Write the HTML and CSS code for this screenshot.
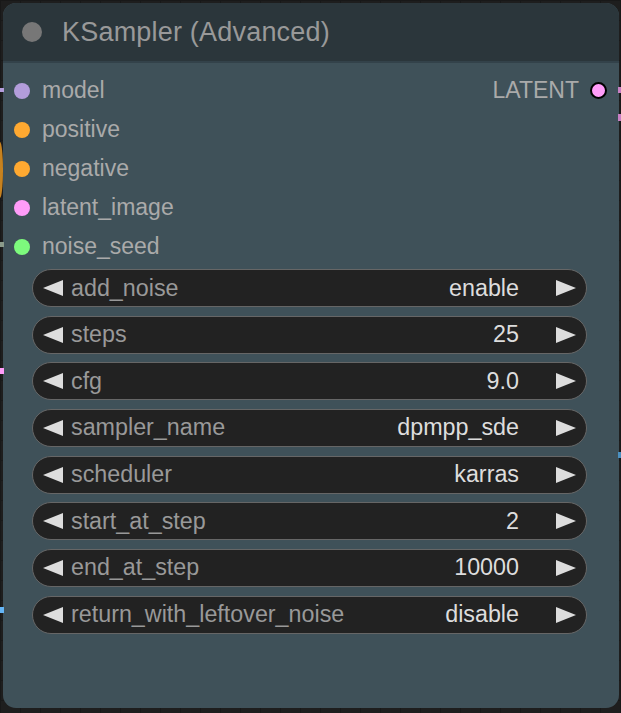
FILE: index.html
```html
<!DOCTYPE html>
<html>
<head>
<meta charset="utf-8">
<link rel="stylesheet" href="styles.css">
</head>
<body>
<div class="canvas">
  <span class="link l-model"></span>
  <span class="link l-orange"></span>
  <span class="link l-gray"></span>
  <span class="link l-pink"></span>
  <span class="link l-blue"></span>
  <span class="link r-pink1"></span>
  <span class="link r-pink2"></span>
  <span class="link r-blue"></span>

  <div class="node">
    <div class="title">
      <span class="title-dot"></span>
      <span class="title-text">KSampler (Advanced)</span>
    </div>
    <div class="body">
      <div class="slots">
        <div class="row">
          <div class="slot"><span class="dot c-model"></span><span>model</span></div>
          <div class="slot out"><span>LATENT</span><span class="dot c-latent outline"></span></div>
        </div>
        <div class="row"><div class="slot"><span class="dot c-cond"></span><span>positive</span></div></div>
        <div class="row"><div class="slot"><span class="dot c-cond"></span><span>negative</span></div></div>
        <div class="row"><div class="slot"><span class="dot c-latent"></span><span>latent_image</span></div></div>
        <div class="row"><div class="slot"><span class="dot c-int"></span><span>noise_seed</span></div></div>
      </div>
      <div class="widgets">
        <div class="widget"><span class="arrow left"></span><span class="label">add_noise</span><span class="value">enable</span><span class="arrow right"></span></div>
        <div class="widget"><span class="arrow left"></span><span class="label">steps</span><span class="value">25</span><span class="arrow right"></span></div>
        <div class="widget"><span class="arrow left"></span><span class="label">cfg</span><span class="value">9.0</span><span class="arrow right"></span></div>
        <div class="widget"><span class="arrow left"></span><span class="label">sampler_name</span><span class="value">dpmpp_sde</span><span class="arrow right"></span></div>
        <div class="widget"><span class="arrow left"></span><span class="label">scheduler</span><span class="value">karras</span><span class="arrow right"></span></div>
        <div class="widget"><span class="arrow left"></span><span class="label">start_at_step</span><span class="value">2</span><span class="arrow right"></span></div>
        <div class="widget"><span class="arrow left"></span><span class="label">end_at_step</span><span class="value">10000</span><span class="arrow right"></span></div>
        <div class="widget"><span class="arrow left"></span><span class="label">return_with_leftover_noise</span><span class="value">disable</span><span class="arrow right"></span></div>
      </div>
    </div>
  </div>
</div>
</body>
</html>
```

FILE: styles.css
```css
html, body {
  margin: 0;
  padding: 0;
}
body {
  width: 621px;
  height: 713px;
  overflow: hidden;
  background-color: #1e1e1e;
  background-image:
    linear-gradient(to right, #181818 1px, transparent 1px),
    linear-gradient(to bottom, #181818 1px, transparent 1px);
  background-size: 20px 20px;
  font-family: "Liberation Sans", Arial, sans-serif;
}
.canvas {
  position: relative;
  width: 621px;
  height: 713px;
  padding: 3px 2px 0 3px;
  box-sizing: border-box;
}
.link {
  position: absolute;
  display: block;
}
.l-model { left: 0; top: 88px; width: 4px; height: 4px; background: #b39ddb; }
.l-orange { left: -3px; top: 142px; width: 6px; height: 56px; border-radius: 50%; background: #c7821f; }
.l-gray { left: 0; top: 242px; width: 4px; height: 5px; background: #8a9a8a; }
.l-pink { left: 0; top: 368px; width: 4px; height: 6px; background: #ff9cf9; }
.l-blue { left: 0; top: 607px; width: 4px; height: 6px; background: #64b5f6; }
.r-pink1 { right: 0; top: 87px; width: 3px; height: 6px; background: #c97fc4; }
.r-pink2 { right: 0; top: 114px; width: 3px; height: 7px; background: #c97fc4; }
.r-blue { right: 0; top: 452px; width: 3px; height: 6px; background: #4a90c0; }

.node {
  width: 616px;
  height: 705px;
  border-radius: 13px;
  background: #3f5159;
  overflow: hidden;
  display: flex;
  flex-direction: column;
}
.title {
  height: 58px;
  background: #2b363b;
  border-bottom: 2px solid #33424a;
  display: flex;
  align-items: center;
  padding-left: 19px;
  gap: 20px;
  flex-shrink: 0;
}
.title-dot {
  width: 20px;
  height: 20px;
  border-radius: 50%;
  background: #777777;
}
.title-text {
  font-size: 27px;
  color: #999999;
  letter-spacing: 0.2px;
}
.body {
  padding-top: 8px;
  display: flex;
  flex-direction: column;
}
.slots {
  display: flex;
  flex-direction: column;
}
.row {
  height: 39px;
  display: flex;
  align-items: center;
  justify-content: space-between;
  padding: 0 12px 0 11px;
}
.slot {
  display: flex;
  align-items: center;
  gap: 12px;
  font-size: 23px;
  color: #aaaaaa;
}
.slot.out {
  gap: 11px;
}
.dot {
  width: 16px;
  height: 16px;
  border-radius: 50%;
  box-sizing: border-box;
}
.c-model { background: #b39ddb; }
.c-cond { background: #ffa931; }
.c-latent { background: #ff9cf9; }
.c-int { background: #7dfa7d; }
.outline { border: 2px solid #000; width: 17px; height: 17px; }

.widgets {
  margin-top: 3px;
  display: flex;
  flex-direction: column;
  gap: 8.67px;
  padding-left: 29px;
}
.widget {
  width: 555px;
  height: 38px;
  box-sizing: border-box;
  border: 1.5px solid #666666;
  border-radius: 19px;
  background: #222222;
  display: flex;
  align-items: center;
  padding: 0 10px 0 10px;
  font-size: 23.3px;
}
.arrow {
  width: 0;
  height: 0;
  border-top: 8px solid transparent;
  border-bottom: 8px solid transparent;
  flex-shrink: 0;
}
.arrow.left {
  border-right: 20px solid #dddddd;
}
.arrow.right {
  border-left: 20px solid #dddddd;
}
.label {
  color: #999999;
  margin-left: 8px;
  flex: 1;
  white-space: nowrap;
}
.value {
  color: #dddddd;
  margin-right: 37px;
  white-space: nowrap;
}
```
